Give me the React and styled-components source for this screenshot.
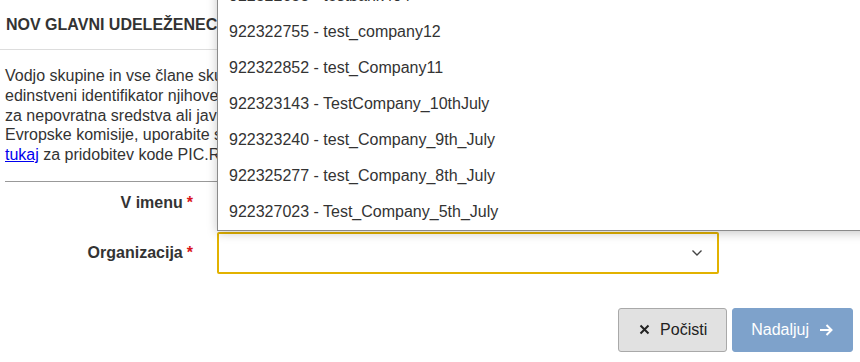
import React from 'react';
import styled, { createGlobalStyle } from 'styled-components';

const GlobalStyle = createGlobalStyle`
    body {
        margin: 0;
        background: #fff;
        font-family: "Liberation Sans", Arial, sans-serif;
        color: #333;
    }
`;

const Page = styled.div`
    width: 860px;
    height: 362px;
    overflow: hidden;
    background: #fff;
`;

const Header = styled.header`
    height: 49px;
    display: flex;
    align-items: center;
    padding: 0 6px;
    border-bottom: 1px solid #ddd;

    h3 {
        margin: 0;
        font-size: 16px;
        font-weight: 700;
        color: #333;
    }
`;

const Body = styled.section`
    padding: 0 5px;
`;

const Intro = styled.p`
    margin: 16px 0 16px;
    font-size: 16px;
    line-height: 19.75px;
    width: 212px;
    white-space: nowrap;

    a {
        color: #0000ee;
        text-decoration: underline;
    }
`;

const Divider = styled.hr`
    margin: 0;
    border: 0;
    border-top: 1px solid #999;
`;

const Form = styled.div`
    display: grid;
    grid-template-columns: 188px 502px;
    column-gap: 24px;
    row-gap: 8px;
`;

const Label = styled.label`
    display: flex;
    align-items: center;
    justify-content: flex-end;
    height: 42px;
    font-size: 16px;
    font-weight: 700;
    color: #333;

    span {
        color: #d9141c;
        margin-left: 4px;
    }
`;

const Field = styled.div`
    position: relative;
    height: 42px;
`;

const Select = styled.div`
    box-sizing: border-box;
    height: 42px;
    border: 2px solid ${({ focused }) => (focused ? '#e2b200' : '#ccc')};
    border-radius: 2px;
    background: #fff;
    display: flex;
    align-items: center;
    justify-content: flex-end;
    padding-right: 14px;
`;

const Menu = styled.ul`
    position: absolute;
    left: 0;
    bottom: calc(100% + 1px);
    width: 680px;
    margin: 0;
    padding: 0;
    list-style: none;
    background: #fff;
    border: 1px solid #8a8a8a;
    box-shadow: 0 2px 10px rgba(0, 0, 0, 0.22);
    z-index: 5;
`;

const Item = styled.li`
    height: 36px;
    display: flex;
    align-items: center;
    padding-left: 11px;
    font-size: 16px;
    color: #333;
    white-space: nowrap;
`;

const Actions = styled.div`
    display: flex;
    justify-content: flex-end;
    gap: 5px;
    padding: 34px 2px 0 0;
`;

const Button = styled.button`
    box-sizing: border-box;
    height: 44px;
    display: flex;
    align-items: center;
    gap: 10px;
    padding: 0 19px 0 ${({ primary }) => (primary ? '18px' : '20px')};
    border-radius: 3px;
    font-family: inherit;
    font-size: 16px;
    border: 1px solid ${({ primary }) => (primary ? '#7ea2cb' : '#a9a9a9')};
    background: ${({ primary }) => (primary ? '#7ea2cb' : '#e1e1e1')};
    color: ${({ primary }) => (primary ? '#fff' : '#222')};
`;

const companies = [
    '922322658 - testbank404',
    '922322755 - test_company12',
    '922322852 - test_Company11',
    '922323143 - TestCompany_10thJuly',
    '922323240 - test_Company_9th_July',
    '922325277 - test_Company_8th_July',
    '922327023 - Test_Company_5th_July',
];

export default function App() {
    return (
        <Page>
            <GlobalStyle />
            <Header>
                <h3>NOV GLAVNI UDELEŽENEC</h3>
            </Header>
            <Body>
                <Intro>
                    Vodjo skupine in vse člane skupine<br />
                    edinstveni identifikator njihove<br />
                    za nepovratna sredstva ali javna<br />
                    Evropske komisije, uporabite s<br />
                    <a href="#">tukaj</a> za pridobitev kode PIC.R
                </Intro>
                <Divider />
                <Form>
                    <Label>V imenu<span>*</span></Label>
                    <Field />
                    <Label>Organizacija<span>*</span></Label>
                    <Field>
                        <Menu>
                            {companies.map((c) => (
                                <Item key={c}>{c}</Item>
                            ))}
                        </Menu>
                        <Select focused>
                            <svg width="12" height="8" viewBox="0 0 12 8">
                                <path d="M1.5 1.5 L6 6 L10.5 1.5" fill="none" stroke="#444" strokeWidth="1.4" />
                            </svg>
                        </Select>
                    </Field>
                </Form>
                <Actions>
                    <Button>
                        <svg width="11" height="11" viewBox="0 0 11 11">
                            <path d="M1.5 1.5 L9.5 9.5 M9.5 1.5 L1.5 9.5" stroke="#222" strokeWidth="2" />
                        </svg>
                        Počisti
                    </Button>
                    <Button primary>
                        Nadaljuj
                        <svg width="14" height="14" viewBox="0 0 14 14">
                            <path d="M1 7 H12.5 M7.5 2 L12.5 7 L7.5 12" fill="none" stroke="#fff" strokeWidth="2" />
                        </svg>
                    </Button>
                </Actions>
            </Body>
        </Page>
    );
}
